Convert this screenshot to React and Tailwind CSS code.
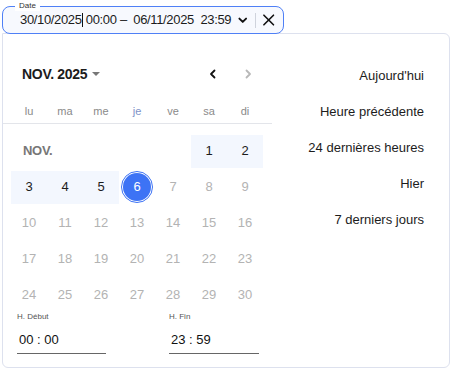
import React from 'react';

const weekDays = ['lu', 'ma', 'me', 'je', 've', 'sa', 'di'];
const presets = ["Aujourd'hui", 'Heure précédente', '24 dernières heures', 'Hier', '7 derniers jours'];

const weeks = [
  [10, 11, 12, 13, 14, 15, 16],
  [17, 18, 19, 20, 21, 22, 23],
  [24, 25, 26, 27, 28, 29, 30],
];

const Chevron = ({ dir = 'left', className }) => (
  <svg width="12" height="12" viewBox="0 0 12 12" className={className} fill="none" stroke="currentColor" strokeWidth="1.8" strokeLinecap="round" strokeLinejoin="round">
    {dir === 'left' ? <path d="M7.5 2.5 4 6l3.5 3.5" /> : <path d="M4.5 2.5 8 6 4.5 9.5" />}
  </svg>
);

const Day = ({ n, range, active }) => (
  <div className="h-[36px] py-[1.5px]">
    <div className={`h-full flex items-center justify-center text-[13px] ${range ? 'bg-[#f3f7fe] text-[#1c1c1c]' : 'text-[#b3b3b3]'}`}>
      {active ? (
        <div className="w-[32px] h-[32px] rounded-full border border-[#3d73f5] p-[1px] bg-white">
          <div className="w-full h-full rounded-full bg-[#3d73f5] text-white flex items-center justify-center">{n}</div>
        </div>
      ) : (
        n
      )}
    </div>
  </div>
);

export default function App() {
  return (
    <div className="w-[451px] h-[370px] bg-white pt-[6px] px-[2px] font-['Liberation_Sans',Arial,sans-serif] text-[#1c1c1c]">
      {/* input */}
      <div className="relative z-10 -mb-[1px] w-[282px] h-[28px] rounded-[8px] border border-[#4f80f6] bg-[#f7f9fe] flex items-center pl-[17px] pr-[8px]">
        <span className="absolute -top-[6px] left-[12px] bg-white px-[4px] text-[8px] leading-[10px] text-[#333]">Date</span>
        <span className="text-[13px] whitespace-pre tracking-[-0.35px]">
          30/10/2025<span className="inline-block w-[1px] h-[14px] bg-[#111] align-middle -mt-[2px]" /> 00:00 –  06/11/2025  23:59
        </span>
        <svg width="12" height="12" viewBox="0 0 12 12" className="ml-[6px]" fill="none" stroke="#111" strokeWidth="2" strokeLinecap="round" strokeLinejoin="round">
          <path d="M2.5 4.5 6 8l3.5-3.5" />
        </svg>
        <div className="w-[1px] h-[15px] bg-[#cfd3dc] mx-[6px]" />
        <svg width="14" height="14" viewBox="0 0 14 14" fill="none" stroke="#111" strokeWidth="1.7" strokeLinecap="round">
          <path d="M2 2l10 10M12 2 2 12" />
        </svg>
      </div>

      {/* panel */}
      <div className="w-[448px] h-[335px] border border-[#dde1ee] rounded-b-[6px] rounded-tr-[6px] flex">
        <div className="w-[269px] flex flex-col">
          <div className="h-[36px] mt-[22px] flex items-center pl-[19px] pr-[18px]">
            <span className="text-[14px] font-bold tracking-[-0.3px]">NOV. 2025</span>
            <svg width="10" height="6" viewBox="0 0 10 6" className="ml-[4px]">
              <path d="M1 1h8L5 5z" fill="#777" />
            </svg>
            <Chevron dir="left" className="ml-auto text-[#111]" />
            <Chevron dir="right" className="ml-[23px] text-[#b8b8b8]" />
          </div>
          <div className="grid grid-cols-[repeat(7,36px)] pl-[8px] h-[24px] items-center mt-[7px]">
            {weekDays.map((d) => (
              <div key={d} className={`text-center text-[11px] ${d === 'je' ? 'text-[#8093c8]' : 'text-[#8a8a8a]'}`}>{d}</div>
            ))}
          </div>
          <div className="h-[1px] bg-[#e3e5ea]" />
          <div className="grid grid-cols-[repeat(7,36px)] pl-[8px] mt-[9px]">
            <div className="col-span-5 h-[36px] flex items-center pl-[12px] text-[13px] font-bold text-[#777] tracking-[-0.3px]">NOV.</div>
            <Day n={1} range />
            <Day n={2} range />
            <Day n={3} range />
            <Day n={4} range />
            <Day n={5} range />
            <Day n={6} active />
            <Day n={7} />
            <Day n={8} />
            <Day n={9} />
            {weeks.flat().map((n) => (
              <Day key={n} n={n} />
            ))}
          </div>
          <div className="flex pl-[14px] -mt-[1px]">
            <div className="w-[152px]">
              <div className="text-[8px] text-[#555] leading-[10px]">H. Début</div>
              <div className="w-[89px] mt-[8px] border-b border-[#666] pb-[3px] pl-[2px] text-[13px] text-[#111]">00 : 00</div>
            </div>
            <div>
              <div className="text-[8px] text-[#555] leading-[10px]">H. Fin</div>
              <div className="w-[90px] mt-[8px] border-b border-[#666] pb-[3px] pl-[2px] text-[13px] text-[#111]">23 : 59</div>
            </div>
          </div>
        </div>
        <div className="flex-1 flex flex-col items-end pr-[25px] pt-[24px]">
          {presets.map((p) => (
            <div key={p} className="h-[36px] flex items-center text-[13px] text-[#1c1c1c]">{p}</div>
          ))}
        </div>
      </div>
    </div>
  );
}
